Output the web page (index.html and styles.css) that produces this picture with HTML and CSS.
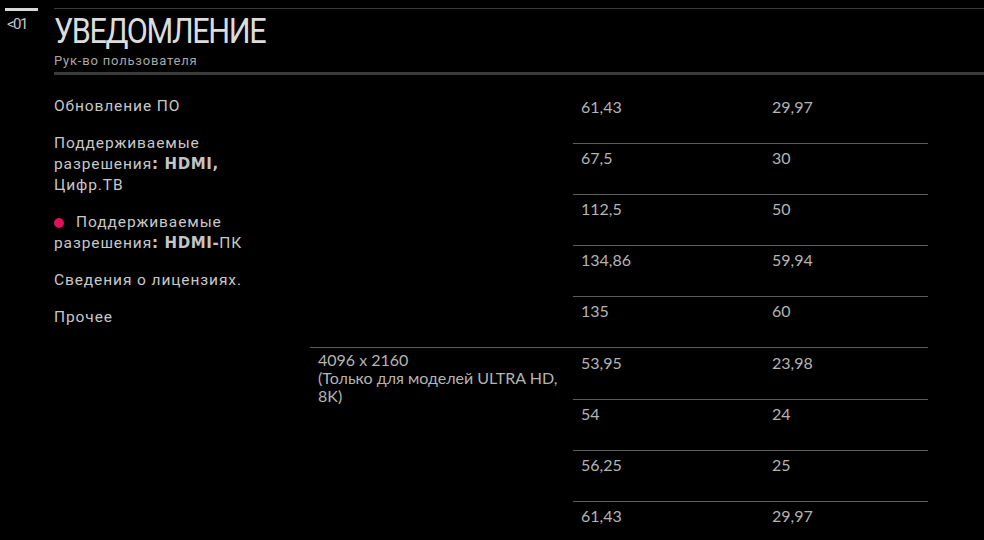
FILE: index.html
```html
<!DOCTYPE html>
<html lang="ru">
<head>
<meta charset="utf-8">
<link rel="stylesheet" href="styles.css">
</head>
<body>
<div class="page">
  <header class="top">
    <div class="back">
      <div class="back-bar"></div>
      <div class="back-label">&lt;01</div>
    </div>
    <div class="head">
      <h1 class="title">УВЕДОМЛЕНИЕ</h1>
      <div class="subtitle">Рук-во пользователя</div>
    </div>
  </header>
  <main class="main">
    <nav class="nav">
      <div class="nav-item">Обновление ПО</div>
      <div class="nav-item">Поддерживаемые разрешения<span class="latin">: HDMI,</span> Цифр.ТВ</div>
      <div class="nav-item active"><span class="dot"></span>Поддерживаемые разрешения<span class="latin">: HDMI-</span>ПК</div>
      <div class="nav-item">Сведения о лицензиях.</div>
      <div class="nav-item">Прочее</div>
    </nav>
    <div class="table">
      <div class="group">
        <div class="res"></div>
        <div class="rows">
          <div class="row first"><div class="cell">61,43</div><div class="cell">29,97</div></div>
          <div class="row"><div class="cell">67,5</div><div class="cell">30</div></div>
          <div class="row"><div class="cell">112,5</div><div class="cell">50</div></div>
          <div class="row"><div class="cell">134,86</div><div class="cell">59,94</div></div>
          <div class="row"><div class="cell">135</div><div class="cell">60</div></div>
        </div>
      </div>
      <div class="group bordered">
        <div class="res">4096 x 2160<br>(Только для моделей ULTRA HD, 8K)</div>
        <div class="rows">
          <div class="row first"><div class="cell">53,95</div><div class="cell">23,98</div></div>
          <div class="row"><div class="cell">54</div><div class="cell">24</div></div>
          <div class="row"><div class="cell">56,25</div><div class="cell">25</div></div>
          <div class="row"><div class="cell">61,43</div><div class="cell">29,97</div></div>
        </div>
      </div>
    </div>
  </main>
</div>
</body>
</html>
```
FILE: styles.css
```css
* { box-sizing: border-box; }
html, body { margin: 0; padding: 0; background: #000; }
body { width: 984px; height: 540px; overflow: hidden; font-family: Roboto, "Liberation Sans", sans-serif; color: #c8c8c8; }
.page { padding-top: 8px; }
.top { display: flex; }
.back { width: 54px; padding-left: 5px; }
.back-bar { width: 33px; height: 3px; background: #d8d8d8; }
.back-label { margin-top: 5px; padding-left: 2px; font-size: 15px; line-height: 17px; color: #c8c8c8; letter-spacing: -1.5px; }
.head { flex: 1; border-top: 1px solid #3a3a3a; border-bottom: 3px solid #3a3a3a; padding-bottom: 3px; }
.title { margin: 0; padding-top: 3px; font-weight: 400; font-size: 35px; line-height: 40px; color: #dcdcdc; letter-spacing: -1.6px; transform: scaleX(0.875); transform-origin: left center; }
.subtitle { font-size: 13px; line-height: 16px; color: #a8a8a8; margin-top: 1px; letter-spacing: 0.8px; }
.main { display: flex; padding-top: 17px; }
.nav { flex: none; width: 310px; padding-left: 54px; padding-right: 40px; padding-top: 4px; font-size: 15.5px; line-height: 21px; letter-spacing: 0.9px; }
.nav-item { margin-bottom: 16px; }
.latin { font-family: "DejaVu Sans", sans-serif; font-size: 15px; font-weight: 700; letter-spacing: 0.6px; color: #c4c4c4; }
.dot { display: inline-block; width: 10px; height: 10px; border-radius: 50%; background: #e0105a; margin-right: 12px; vertical-align: -1px; }
.table { flex: none; width: 618px; font-family: Lato, "Liberation Sans", sans-serif; font-size: 16px; color: #b4b4b4; }
.group { display: flex; }
.group.bordered { border-top: 1px solid #5e5e5e; }
.res { flex: none; width: 263px; padding: 3px 0 0 8px; line-height: 18px; }
.rows { flex: 1; }
.row { display: flex; height: 51px; border-top: 1px solid #5e5e5e; padding-top: 3px; line-height: 21px; }
.row.first { border-top: 0; padding-top: 4px; }
.cell { flex: none; width: 191px; padding-left: 8px; }
.cell + .cell { flex: 1; width: auto; }
```
